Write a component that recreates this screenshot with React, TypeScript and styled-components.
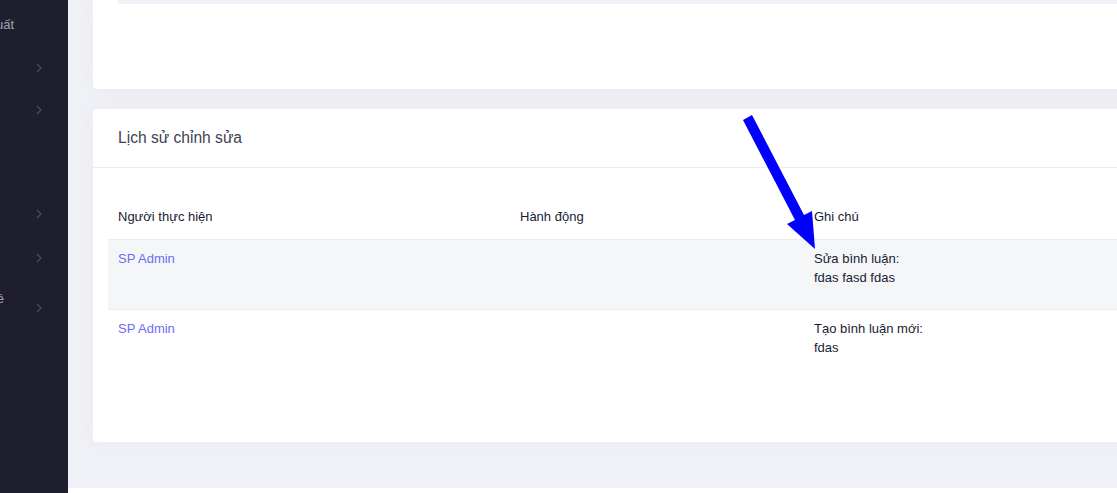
import React from "react";
import styled, { createGlobalStyle } from "styled-components";

const GlobalStyle = createGlobalStyle`
  html, body { margin: 0; padding: 0; }
  body {
    font-family: "Liberation Sans", Arial, sans-serif;
    font-size: 13px;
    background: #ffffff;
    overflow: hidden;
  }
  #root { width: 1117px; height: 493px; }
`;

const Page = styled.div`
  position: relative;
  display: flex;
  width: 1117px;
  height: 493px;
  overflow: hidden;
`;

const Sidebar = styled.aside`
  flex: 0 0 68px;
  width: 68px;
  background: #1e1e2d;
  overflow: hidden;
  display: flex;
  flex-direction: column;
`;

const NavItem = styled.div<{ $h: number }>`
  height: ${(p) => p.$h}px;
  flex: 0 0 auto;
  display: flex;
  align-items: center;
`;

const NavLabel = styled.div<{ $dy?: number; $w: number }>`
  width: ${(p) => p.$w}px;
  flex: 0 0 ${(p) => p.$w}px;
  margin-right: ${(p) => 14 - p.$w}px;
  display: flex;
  justify-content: flex-end;
  white-space: nowrap;
  color: #a2a3b7;
  font-size: 13px;
  line-height: 19px;
  margin-top: ${(p) => p.$dy ?? 0}px;
`;

const Chevron = styled.svg`
  margin-left: 22px;
  flex: 0 0 auto;
`;

const Main = styled.div`
  flex: 1;
  display: flex;
  flex-direction: column;
  min-width: 0;
`;

const Content = styled.main`
  flex: 0 0 488px;
  background: #f0f1f6;
  padding: 0 0 46px 25px;
  box-sizing: border-box;
  display: flex;
  flex-direction: column;
  gap: 20px;
`;

const Footer = styled.footer`
  flex: 1;
  background: #ffffff;
`;

const Card = styled.section<{ $h: number; $topFlat?: boolean }>`
  height: ${(p) => p.$h}px;
  flex: 0 0 auto;
  margin-right: -25px;
  background: #ffffff;
  border-radius: ${(p) => (p.$topFlat ? "0 0 4px 4px" : "4px")};
  box-shadow: 0 0 20px 0 rgba(76, 87, 125, 0.04);
  display: flex;
  flex-direction: column;
`;

const TopStripe = styled.div`
  height: 4px;
  margin-left: 25px;
  background: #f0f1f6;
`;

const CardHeader = styled.div`
  height: 59px;
  flex: 0 0 59px;
  box-sizing: border-box;
  padding: 0 25px;
  display: flex;
  align-items: center;
  border-bottom: 1px solid #ebedf3;
`;

const CardTitle = styled.h3`
  margin: 0;
  font-size: 15.6px;
  font-weight: 400;
  color: #3f4254;
`;

const CardBody = styled.div`
  padding: 27px 15px 0 15px;
`;

const Table = styled.table`
  width: 100%;
  border-collapse: collapse;
  table-layout: fixed;
`;

const Th = styled.th<{ $w?: number }>`
  box-sizing: border-box;
  text-align: left;
  font-weight: 400;
  font-size: 13px;
  line-height: 19px;
  color: #181c32;
  padding: 12px 10px 13px 10px;
  width: ${(p) => (p.$w ? `${p.$w}px` : "auto")};
  border-bottom: 1px solid #ebedf3;
`;

const Tr = styled.tr<{ $striped?: boolean }>`
  background: ${(p) => (p.$striped ? "#f5f6f8" : "#ffffff")};
  border-bottom: 1px solid ${(p) => (p.$striped ? "#ebedf3" : "transparent")};
`;

const Td = styled.td`
  vertical-align: top;
  font-size: 13px;
  line-height: 19px;
  color: #181c32;
  padding: 9px 10px 22px 10px;
`;

const UserLink = styled.a`
  color: #6b6ef2;
  text-decoration: none;
`;

const Arrow = styled.svg`
  position: absolute;
  left: 0;
  top: 0;
  pointer-events: none;
`;

const ChevronIcon = () => (
  <Chevron width="6" height="10" viewBox="0 0 6 10">
    <path d="M1 1 L5 5 L1 9" fill="none" stroke="#4a4b6e" strokeWidth="1.2" />
  </Chevron>
);

const navItems: { h: number; label?: string; chevron?: boolean; dy?: number; w?: number }[] = [
  { h: 48, label: "Đăng xuất" },
  { h: 40, chevron: true },
  { h: 44, chevron: true },
  { h: 60 },
  { h: 44, chevron: true },
  { h: 44, chevron: true },
  { h: 56, label: "Quản lý nội dung phản hồi về", chevron: true, dy: -19, w: 4 },
];

const rows = [
  { user: "SP Admin", action: "", note: ["Sửa bình luận:", "fdas fasd fdas"], striped: true },
  { user: "SP Admin", action: "", note: ["Tạo bình luận mới:", "fdas"], striped: false },
];

export default function App() {
  return (
    <>
      <GlobalStyle />
      <Page>
        <Sidebar>
          {navItems.map((it, i) => (
            <NavItem key={i} $h={it.h}>
              <NavLabel $dy={it.dy} $w={it.w ?? 14}>
                {it.label ?? ""}
              </NavLabel>
              {it.chevron && <ChevronIcon />}
            </NavItem>
          ))}
        </Sidebar>
        <Main>
          <Content>
            <Card $h={89} $topFlat>
              <TopStripe />
            </Card>
            <Card $h={333}>
              <CardHeader>
                <CardTitle>Lịch sử chỉnh sửa</CardTitle>
              </CardHeader>
              <CardBody>
                <Table>
                  <thead>
                    <tr>
                      <Th $w={402}>Người thực hiện</Th>
                      <Th $w={294}>Hành động</Th>
                      <Th>Ghi chú</Th>
                    </tr>
                  </thead>
                  <tbody>
                    {rows.map((r, i) => (
                      <Tr key={i} $striped={r.striped}>
                        <Td>
                          <UserLink href="#">{r.user}</UserLink>
                        </Td>
                        <Td>{r.action}</Td>
                        <Td>
                          {r.note.map((n, j) => (
                            <div key={j}>{n}</div>
                          ))}
                        </Td>
                      </Tr>
                    ))}
                  </tbody>
                </Table>
              </CardBody>
            </Card>
          </Content>
          <Footer />
        </Main>
        <Arrow width="1117" height="493" viewBox="0 0 1117 493">
          <polygon
            points="743,120 752,115 804,215 812,211 815,249 787,224 795,220"
            fill="#0000ff"
          />
        </Arrow>
      </Page>
    </>
  );
}
